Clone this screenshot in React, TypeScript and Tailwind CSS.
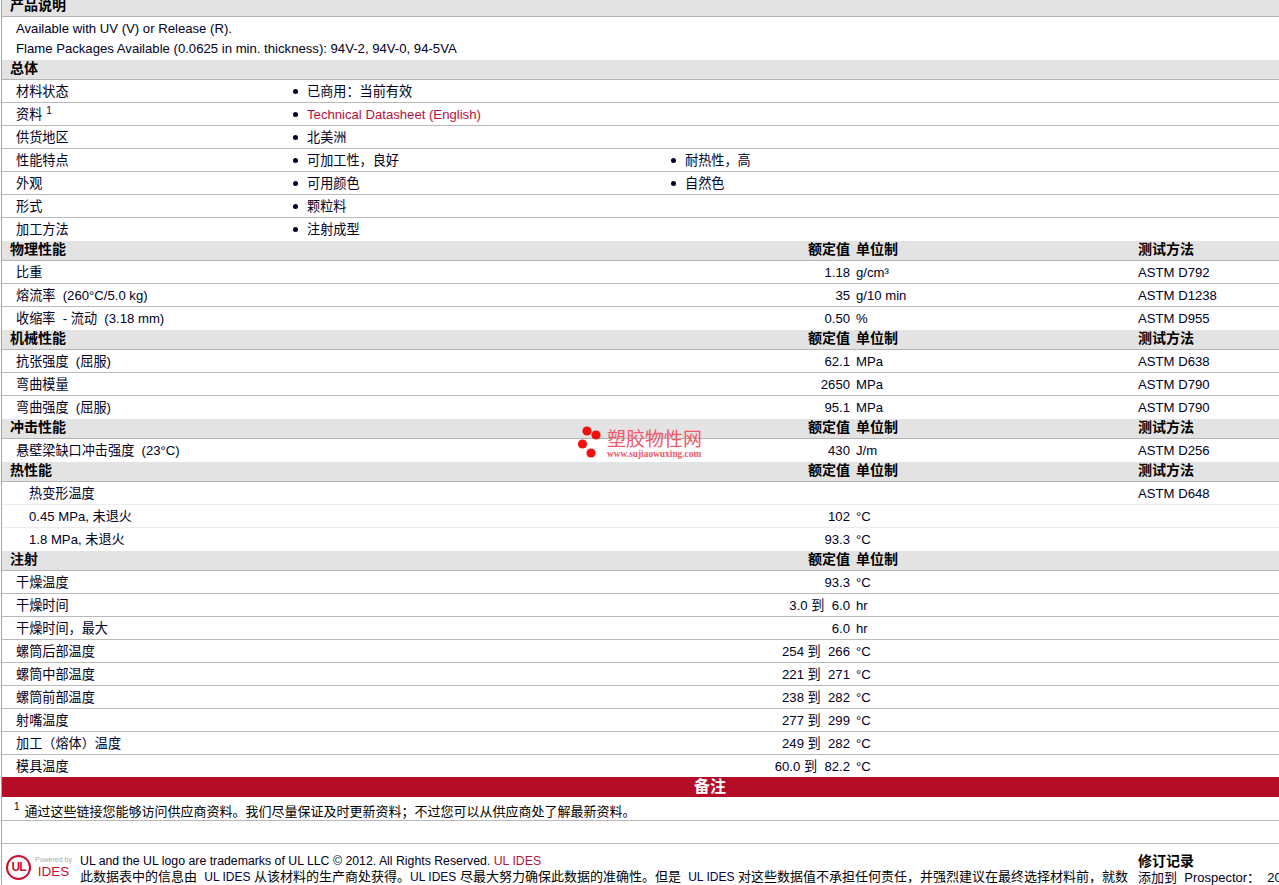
import React from 'react';

const font = "font-['Liberation_Sans','Noto_Sans_CJK_SC',sans-serif]";

function SectionHeader({ title, cols = true, test = true }: { title: string; cols?: boolean; test?: boolean }) {
  return (
    <div className="grid h-[20px] grid-cols-[848px_6px_282px_1fr] border-b border-[#b4b4b4] bg-[#e3e3e3] text-[14px] font-bold leading-[17px] text-black">
      <div className="flex justify-between pl-2">
        <span>{title}</span>
        {cols && <span>额定值</span>}
      </div>
      <div />
      <div>{cols && '单位制'}</div>
      <div>{cols && test && '测试方法'}</div>
    </div>
  );
}

function Spec({ label, value, unit, test, last, indent }: { label: string; value?: string; unit?: string; test?: string; last?: boolean; indent?: boolean }) {
  return (
    <div className={`grid h-[23px] grid-cols-[848px_6px_282px_1fr] items-center ${last ? '' : indent ? 'border-b border-[#ececec]' : 'border-b border-[#b9b9b9]'}`}>
      <div className={`flex justify-between whitespace-pre ${indent ? 'pl-[27px]' : 'pl-[14px]'}`}>
        <span>{label}</span>
        <span>{value}</span>
      </div>
      <div />
      <div>{unit}</div>
      <div>{test}</div>
    </div>
  );
}

function Bullet({ children }: { children: React.ReactNode }) {
  return (
    <div className="flex items-center">
      <span className="mr-[9px] ml-[5px] h-[5px] w-[5px] rounded-full bg-[#000022]" />
      {children}
    </div>
  );
}

function Info({ label, a, b, sup, last }: { label: string; a: React.ReactNode; b?: string; sup?: boolean; last?: boolean }) {
  return (
    <div className={`grid h-[23px] grid-cols-[286px_378px_1fr] items-center ${last ? '' : 'border-b border-[#b9b9b9]'}`}>
      <div className="pl-[14px]">
        {label}
        {sup && <sup className="ml-1 text-[10px] text-[#000066]">1</sup>}
      </div>
      <Bullet>{a}</Bullet>
      {b ? <Bullet>{b}</Bullet> : <div />}
    </div>
  );
}

const physical = [
  ['比重', '1.18', 'g/cm³', 'ASTM D792'],
  ['熔流率  (260°C/5.0 kg)', '35', 'g/10 min', 'ASTM D1238'],
  ['收缩率  - 流动  (3.18 mm)', '0.50', '%', 'ASTM D955'],
];
const mechanical = [
  ['抗张强度  (屈服)', '62.1', 'MPa', 'ASTM D638'],
  ['弯曲模量', '2650', 'MPa', 'ASTM D790'],
  ['弯曲强度  (屈服)', '95.1', 'MPa', 'ASTM D790'],
];
const injection = [
  ['干燥温度', '93.3', '°C'],
  ['干燥时间', '3.0 到  6.0', 'hr'],
  ['干燥时间，最大', '6.0', 'hr'],
  ['螺筒后部温度', '254 到  266', '°C'],
  ['螺筒中部温度', '221 到  271', '°C'],
  ['螺筒前部温度', '238 到  282', '°C'],
  ['射嘴温度', '277 到  299', '°C'],
  ['加工（熔体）温度', '249 到  282', '°C'],
  ['模具温度', '60.0 到  82.2', '°C'],
];

export default function App() {
  return (
    <div className={`relative h-[885px] w-[1279px] overflow-hidden bg-white text-[13.15px] leading-[15px] text-[#000022] ${font}`}>
      <div className="ml-px border-l border-[#a8a8a8]">
        <div className="-mt-[3px]">
          <SectionHeader title="产品说明" cols={false} />
        </div>
        <div className="flex h-[43px] flex-col justify-center gap-[5px] pl-[14px]">
          <div>Available with UV (V) or Release (R).</div>
          <div>Flame Packages Available (0.0625 in min. thickness): 94V-2, 94V-0, 94-5VA</div>
        </div>
        <SectionHeader title="总体" cols={false} />
        <Info label="材料状态" a="已商用：当前有效" />
        <Info label="资料" sup a={<span className="text-[#b5103c]">Technical Datasheet (English)</span>} />
        <Info label="供货地区" a="北美洲" />
        <Info label="性能特点" a="可加工性，良好" b="耐热性，高" />
        <Info label="外观" a="可用颜色" b="自然色" />
        <Info label="形式" a="颗粒料" />
        <Info label="加工方法" a="注射成型" last />
        <SectionHeader title="物理性能" />
        {physical.map((r, i) => (
          <Spec key={r[0]} label={r[0]} value={r[1]} unit={r[2]} test={r[3]} last={i === 2} />
        ))}
        <SectionHeader title="机械性能" />
        {mechanical.map((r, i) => (
          <Spec key={r[0]} label={r[0]} value={r[1]} unit={r[2]} test={r[3]} last={i === 2} />
        ))}
        <SectionHeader title="冲击性能" />
        <Spec label="悬壁梁缺口冲击强度  (23°C)" value="430" unit="J/m" test="ASTM D256" last />
        <SectionHeader title="热性能" />
        <Spec label="热变形温度" test="ASTM D648" indent />
        <Spec label="0.45 MPa, 未退火" value="102" unit="°C" indent />
        <Spec label="1.8 MPa, 未退火" value="93.3" unit="°C" indent last />
        <SectionHeader title="注射" test={false} />
        {injection.map((r, i) => (
          <Spec key={r[0]} label={r[0]} value={r[1]} unit={r[2]} last={i === injection.length - 1} />
        ))}
        <div className="-mt-px h-[20px] bg-[#b50d26] pl-[692px] text-[16px] font-bold leading-[20px] text-white">备注</div>
        <div className="flex h-[24px] items-start border-b border-[#b9b9b9] pt-[7px] pl-[12px] text-[13px] text-black">
          <span className="mt-[-2px] mr-[5px] text-[10px] leading-[10px]">1</span>
          通过这些链接您能够访问供应商资料。我们尽量保证及时更新资料；不过您可以从供应商处了解最新资料。
        </div>
        <div className="h-[23px] border-b border-[#b9b9b9]" />
        <div className="flex h-[60px] pt-[10px]">
          <div className="flex w-[78px] shrink-0 items-start pl-[4px] pt-[1px]">
            <div className="flex h-[25px] w-[25px] shrink-0 items-center justify-center rounded-full border-[2px] border-[#c8102e] text-[12px] font-bold tracking-[-1px] text-[#c8102e]">
              UL
            </div>
            <div className="ml-[4px] flex flex-col items-center">
              <span className="whitespace-nowrap text-[7px] leading-[9px] text-[#aaaaaa]">Powered by</span>
              <span className="text-[13.5px] leading-[16px] text-[#c8102e]">IDES</span>
            </div>
          </div>
          <div className="w-[1058px] shrink-0">
            <div className="text-[12.3px]">
              UL and the UL logo are trademarks of UL LLC © 2012. All Rights Reserved. <span className="text-[#b5103c]">UL IDES</span>
            </div>
            <div className="whitespace-pre text-[13px] text-black">
              此数据表中的信息由  <span className="text-[12px] text-[#000044]">UL IDES</span> 从该材料的生产商处获得。<span className="text-[12px] text-[#000044]">UL IDES</span> 尽最大努力确保此数据的准确性。但是  <span className="text-[12px] text-[#000044]">UL IDES</span> 对这些数据值不承担任何责任，并强烈建议在最终选择材料前，就数
            </div>
          </div>
          <div className="whitespace-pre">
            <div className="text-[14px] font-bold leading-[15px] text-black">修订记录</div>
            <div className="mt-px text-[13px]">添加到  Prospector：  20</div>
          </div>
        </div>
      </div>
      <div className="absolute top-[425px] left-[577px] w-[130px]">
        <svg width="26" height="34" viewBox="0 0 26 34" className="absolute top-0 left-0">
          <circle cx="10" cy="6" r="4.6" fill="#f01010" />
          <circle cx="19" cy="10" r="4.6" fill="#f01010" />
          <circle cx="5.5" cy="19" r="4.6" fill="#f01010" />
          <circle cx="14" cy="28" r="4.6" fill="#f01010" />
        </svg>
        <div className="absolute top-[5px] left-[30px] whitespace-nowrap text-[19px] leading-[20px] text-[#ee5a6a]">塑胶物性网</div>
        <div className="absolute top-[23px] left-[30px] whitespace-nowrap font-['Liberation_Serif',serif] text-[9.4px] leading-[12px] font-bold text-[#ee5a6a]">www.sujiaowuxing.com</div>
      </div>
    </div>
  );
}
